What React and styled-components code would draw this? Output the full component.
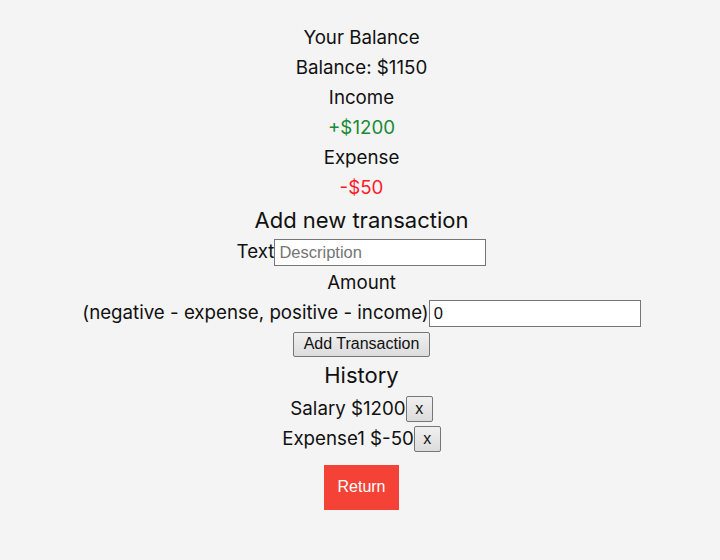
import styled, { createGlobalStyle } from "styled-components";

const GlobalStyle = createGlobalStyle`
  html, body {
    margin: 0;
    padding: 0;
    background: #f4f4f4;
  }
  body {
    font-family: Inter, "Noto Sans", sans-serif;
    color: #111;
  }
`;

const Page = styled.main`
  display: flex;
  flex-direction: column;
  align-items: center;
  padding: 22px 0 0 3px;
  min-height: 538px;
  font-size: 18.72px;
`;

const Line = styled.div`
  display: flex;
  align-items: center;
  justify-content: center;
  height: 30px;
  color: ${({ $tone }) =>
    $tone === "income" ? "#1a8a35" : $tone === "expense" ? "#ff1a2a" : "#111"};
`;

const Heading = styled.h3`
  margin: ${({ $gap }) => $gap || "2px 0 0"};
  font-size: 22px;
  font-weight: 400;
  height: 32px;
  line-height: 32px;
`;

const Field = styled.input`
  box-sizing: border-box;
  width: 212px;
  height: 27px;
  margin-top: 2px;
  padding: 1px 4px;
  border: 1px solid #767676;
  background: #fff;
  font-family: "Liberation Sans", Arial, sans-serif;
  font-size: 16.5px;
  color: #111;
  &::placeholder {
    color: #757575;
  }
`;

const FormRow = styled(Line)`
  height: 31px;
`;

const Button = styled.button`
  box-sizing: border-box;
  font-family: "Liberation Sans", Arial, sans-serif;
  font-size: 16px;
  color: #111;
  background: linear-gradient(#f0f0f0, #dcdcdc);
  border: 1px solid #767676;
  border-radius: 2px;
  padding: 0 10px;
  height: ${({ $small }) => ($small ? "26px" : "25px")};
  ${({ $small }) => ($small ? "width: 27px; padding: 0;" : "")}
`;

const SubmitWrap = styled.div`
  margin-top: 3px;
  margin-bottom: 2px;
`;

const HistoryList = styled.div`
  display: flex;
  flex-direction: column;
  align-items: center;
  margin-top: 3px;
`;

const Return = styled.button`
  margin-top: 11px;
  width: 75px;
  height: 45px;
  border: none;
  background: #f44336;
  color: #fff;
  font-family: "Liberation Sans", Arial, sans-serif;
  font-size: 16px;
`;

const history = [
  { text: "Salary", amount: 1200 },
  { text: "Expense1", amount: -50 },
];

export default function App() {
  const income = history.filter((h) => h.amount > 0).reduce((s, h) => s + h.amount, 0);
  const expense = history.filter((h) => h.amount < 0).reduce((s, h) => s - h.amount, 0);
  return (
    <>
      <GlobalStyle />
      <Page>
        <Line>Your Balance</Line>
        <Line>Balance: ${income - expense}</Line>
        <Line>Income</Line>
        <Line $tone="income">+${income}</Line>
        <Line>Expense</Line>
        <Line $tone="expense">-${expense}</Line>
        <Heading>Add new transaction</Heading>
        <FormRow>
          Text
          <Field placeholder="Description" />
        </FormRow>
        <Line>Amount</Line>
        <FormRow>
          (negative - expense, positive - income)
          <Field defaultValue="0" />
        </FormRow>
        <SubmitWrap>
          <Button>Add Transaction</Button>
        </SubmitWrap>
        <Heading $gap="0">History</Heading>
        <HistoryList>
          {history.map((h) => (
            <Line key={h.text}>
              {h.text} ${h.amount}
              <Button $small>x</Button>
            </Line>
          ))}
        </HistoryList>
        <Return>Return</Return>
      </Page>
    </>
  );
}
